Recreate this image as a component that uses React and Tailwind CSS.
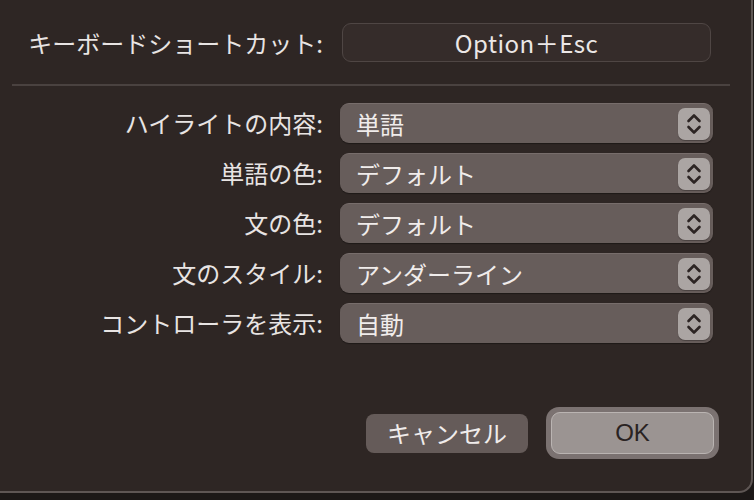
import React from "react";

const font = { fontFamily: '"Noto Sans CJK JP", "Noto Sans", sans-serif' };

function Stepper() {
  return (
    <div className="w-[32px] h-[32px] rounded-[7px] bg-[#aba5a3] flex items-center justify-center shadow-[0_1px_1px_rgba(0,0,0,0.3)]">
      <svg width="18" height="24" viewBox="0 0 18 24" fill="none" stroke="#2c2423" strokeWidth="2.6" strokeLinecap="round" strokeLinejoin="round">
        <path d="M3.5 9 L9 3.5 L14.5 9" />
        <path d="M3.5 15 L9 20.5 L14.5 15" />
      </svg>
    </div>
  );
}

function Row({ label, value }) {
  return (
    <div className="flex items-center h-[40px]">
      <div className="w-[324px] text-right text-[24px] text-[#e8e4e3] leading-none pr-[1px]">{label}</div>
      <div className="ml-[16px] w-[373px] h-[40px] rounded-[9px] bg-[#675d5b] border-t border-[#776d6b] shadow-[0_1px_1px_rgba(0,0,0,0.35)] flex items-center pl-[16px] pr-[3px]">
        <span className="flex-1 text-[24px] text-[#f0eceb] leading-none">{value}</span>
        <Stepper />
      </div>
    </div>
  );
}

export default function App() {
  return (
    <div className="w-[754px] h-[500px] bg-[#1c1817] overflow-hidden" style={font}>
      <div className="w-[753px] h-[493px] bg-[#2e2624] border-r-2 border-b-2 border-[#5e5654] rounded-br-[14px] flex flex-col">
        <div className="flex items-center mt-[23px] h-[39px]">
          <div className="w-[324px] text-right text-[24px] text-[#e8e4e3] leading-none pr-[1px]">キーボードショートカット:</div>
          <div className="ml-[18px] w-[369px] h-[39px] rounded-[9px] bg-[#352c2a] border border-[#4f4644] flex items-center justify-center text-[24px] text-[#ebe7e6] leading-none tracking-[0.5px]">
            Option＋Esc
          </div>
        </div>
        <div className="ml-[12px] w-[718px] h-[2px] bg-[#4a4240] mt-[22px]" />
        <div className="flex flex-col gap-[10px] mt-[17px]">
          <Row label="ハイライトの内容:" value="単語" />
          <Row label="単語の色:" value="デフォルト" />
          <Row label="文の色:" value="デフォルト" />
          <Row label="文のスタイル:" value="アンダーライン" />
          <Row label="コントローラを表示:" value="自動" />
        </div>
        <div className="flex items-center mt-[64px] ml-[366px]">
          <div className="w-[162px] h-[39px] rounded-[8px] bg-[#655b59] flex items-center justify-center text-[24px] text-[#f0eceb] leading-none">
            キャンセル
          </div>
          <div className="ml-[18px] w-[173px] h-[52px] rounded-[13px] bg-[#7b7271] p-[5px]">
            <div className="w-full h-full rounded-[9px] bg-[#9b9492] border border-[#bab4b2] flex items-center justify-center text-[24px] text-[#2a2322] leading-none" style={{ fontFamily: '"Liberation Sans", "Noto Sans", sans-serif' }}>
              OK
            </div>
          </div>
        </div>
      </div>
    </div>
  );
}
